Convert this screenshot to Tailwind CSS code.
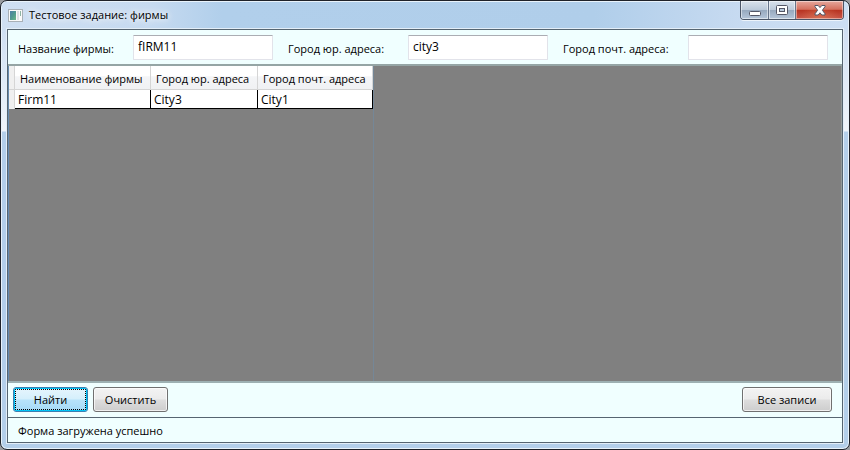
<!DOCTYPE html>
<html lang="ru">
<head>
<meta charset="utf-8">
<meta name="viewport" content="width=device-width, initial-scale=1">
<title>Тестовое задание: фирмы</title>
<script src="https://cdn.jsdelivr.net/npm/@tailwindcss/browser@4"></script>
</head>
<body class="bg-[#9a9ca0] font-['Open_Sans','Noto_Sans',sans-serif] text-[11px] leading-4 text-black">
<div class="flex h-screen flex-col rounded-[7px] border border-[#1f2229] bg-[#b4cfea] bg-[linear-gradient(180deg,#c3d8ef_0px,#d3e2f3_40px,#f0f5fb_130px,#b4cfea_131px)] px-[6px] pb-[6px] shadow-[inset_0_0_0_1px_#e9f3fb]">
  <header class="-mx-[5px] mt-px flex h-[27px] shrink-0 items-start justify-between rounded-t-[6px] bg-[linear-gradient(90deg,#cfdff2_0px,#c6daf0_150px,#b1cfeb_220px,#b0ceea_70%,#c8dbf1_88%,#cddff3_100%)] pl-[6px] pr-[4px]">
    <div class="flex h-[26px] items-center gap-[6px]">
      <svg class="h-[13px] w-[15px]" viewBox="0 0 15 13" aria-hidden="true">
        <defs><linearGradient id="g" x1="0" y1="0" x2="1" y2="1"><stop offset="0" stop-color="#4d7fa8"/><stop offset=".5" stop-color="#4f9890"/><stop offset="1" stop-color="#6cb888"/></linearGradient></defs>
        <rect x=".5" y=".5" width="14" height="12" fill="#fafafa" stroke="#a9b0b7"/>
        <rect x="2" y="2" width="6" height="9" fill="url(#g)"/>
        <rect x="9" y="2" width="2" height="9" fill="#dde1e4"/>
        <rect x="12" y="2" width="1" height="5" fill="#8fb5a4"/>
      </svg>
      <h1 class="[text-shadow:0_0_6px_#fff,0_0_10px_#fff]">Тестовое задание: фирмы</h1>
    </div>
    <div class="-mt-px flex h-[19px] overflow-hidden rounded-b-[4px] border border-t-0 border-[#4a5567] shadow-[0_1px_0_#edf4fb]">
      <button type="button" aria-label="Свернуть" class="flex w-[28px] items-center justify-center border-r border-[#66748a] bg-[linear-gradient(180deg,#d9e2ec_0%,#bccada_48%,#97a9bf_52%,#b5c6da_100%)] shadow-[inset_0_0_0_1px_#ffffff80]">
        <svg class="h-[13px] w-[14px]" viewBox="0 0 14 13" aria-hidden="true"><rect x="1.5" y="7.500" width="11" height="4" rx="1" fill="#fff" stroke="#535666"/></svg>
      </button>
      <button type="button" aria-label="Развернуть" class="flex w-[27px] items-center justify-center border-r border-[#66748a] bg-[linear-gradient(180deg,#d9e2ec_0%,#bccada_48%,#97a9bf_52%,#b5c6da_100%)] shadow-[inset_0_0_0_1px_#ffffff80]">
        <svg class="h-[13px] w-[14px]" viewBox="0 0 14 13" aria-hidden="true"><rect x="1.5" y="1.500" width="11" height="9" rx="1" fill="#fff" stroke="#535666"/><rect x="4.500" y="4.500" width="5" height="3" fill="#b9cadd" stroke="#535666"/></svg>
      </button>
      <button type="button" aria-label="Закрыть" class="flex w-[47px] items-center justify-center bg-[radial-gradient(ellipse_at_50%_100%,#e88a6080,transparent_60%),linear-gradient(180deg,#e6a89d_0%,#d4705f_46%,#b83422_52%,#c9584a_100%)] shadow-[inset_0_0_0_1px_#ffffff70]">
        <svg class="h-[13px] w-[14px]" viewBox="0 0 14 13" aria-hidden="true"><path d="M2 1.500h3.200L7 3.600l1.800-2.100H12v1.200L9.400 6.200 12 9.800V11H8.800L7 8.800 5.200 11H2V9.800l2.600-3.600L2 2.700z" fill="#fff" stroke="#535666" stroke-linejoin="round"/></svg>
      </button>
    </div>
  </header>

  <main class="flex min-h-0 flex-1 flex-col border border-[#566571] bg-[#f0ffff] shadow-[0_0_0_1px_#e3eef8]">
    <form class="flex h-[36px] shrink-0 items-start justify-between border-b-2 border-[#95a5a5] pl-[10px] pr-[14px] pt-[5px]">
      <div class="flex w-[255px] justify-between">
        <label for="firm" class="pt-[6px]">Название фирмы:</label>
        <input id="firm" type="text" value="fIRM11" class="h-[25px] w-[140px] rounded-[1px] border border-[#e2e3ea] border-t-[#abadb3] bg-white pb-[2px] pl-[4px] text-[12px]">
      </div>
      <div class="flex w-[260px] justify-between">
        <label for="legal" class="pt-[6px]">Город юр. адреса:</label>
        <input id="legal" type="text" value="city3" class="h-[25px] w-[140px] rounded-[1px] border border-[#e2e3ea] border-t-[#abadb3] bg-white pb-[2px] pl-[4px] text-[12px]">
      </div>
      <div class="flex w-[265px] justify-between">
        <label for="post" class="pt-[6px]">Город почт. адреса:</label>
        <input id="post" type="text" class="h-[25px] w-[140px] rounded-[1px] border border-[#e2e3ea] border-t-[#abadb3] bg-white pb-[2px] pl-[4px] text-[12px]">
      </div>
    </form>

    <section class="min-h-0 flex-1 border-x border-l-[#688caf] border-r-[#929a9a] bg-[#808080]">
      <div class="h-full w-[365px] border-r border-[#758797]">
        <table class="w-[364px] table-fixed border-separate border-spacing-0">
          <colgroup><col class="w-[6px]"><col class="w-[136px]"><col class="w-[107px]"><col></colgroup>
          <thead>
            <tr class="h-[24px] whitespace-nowrap bg-[linear-gradient(180deg,#fff_0%,#fff_40%,#f4f5f7_45%,#f0f1f3_100%)] text-left">
              <td class="border-b border-r border-[#d5d5d5] bg-[#f0f0f0] p-0"></td>
              <th scope="col" class="border-b border-r border-[#d5d5d5] p-0 pl-[5px] pt-[2px] font-normal">Наименование фирмы</th>
              <th scope="col" class="border-b border-r border-[#d5d5d5] p-0 pl-[5px] pt-[2px] font-normal">Город юр. адреса</th>
              <th scope="col" class="border-b border-r border-[#d5d5d5] p-0 pl-[5px] pt-[2px] font-normal">Город почт. адреса</th>
            </tr>
          </thead>
          <tbody>
            <tr class="h-[19px] bg-white text-[12px]">
              <td class="border-r border-[#d5d5d5] bg-[#f0f0f0] p-0"></td>
              <td class="border-b border-r border-black p-0 pl-[3px] pt-[2px]">Firm11</td>
              <td class="border-b border-r border-black p-0 pl-[3px] pt-[2px]">City3</td>
              <td class="border-b border-r border-black p-0 pl-[3px] pt-[2px]">City1</td>
            </tr>
          </tbody>
        </table>
      </div>
    </section>

    <div class="flex h-[36px] shrink-0 items-start gap-[5px] border-t-2 border-[#9db0b2] px-[5px] pt-[4px]">
      <button type="button" class="h-[25px] w-[75px] rounded-[3px] border border-[#3c7fb1] bg-[linear-gradient(180deg,#e6f5fd_0%,#d5effc_48%,#b8e3fa_52%,#a5daf7_100%)] shadow-[inset_0_0_0_1px_#00c3f5] outline-1 -outline-offset-3 outline-dotted outline-black">Найти</button>
      <button type="button" class="h-[25px] w-[75px] rounded-[3px] border border-[#707070] bg-[linear-gradient(180deg,#f3f3f3_0%,#ebebeb_48%,#dddddd_52%,#cdcdcd_100%)] shadow-[inset_0_0_0_1px_#ffffffb0]">Очистить</button>
      <button type="button" class="ml-auto mr-[5px] h-[25px] w-[90px] rounded-[3px] border border-[#707070] bg-[linear-gradient(180deg,#f3f3f3_0%,#ebebeb_48%,#dddddd_52%,#cdcdcd_100%)] shadow-[inset_0_0_0_1px_#ffffffb0]">Все записи</button>
    </div>
    <footer class="h-[25px] shrink-0 border-t border-[#566571] pl-[10px] pt-[5px]">Форма загружена успешно</footer>
  </main>
</div>
</body>
</html>
